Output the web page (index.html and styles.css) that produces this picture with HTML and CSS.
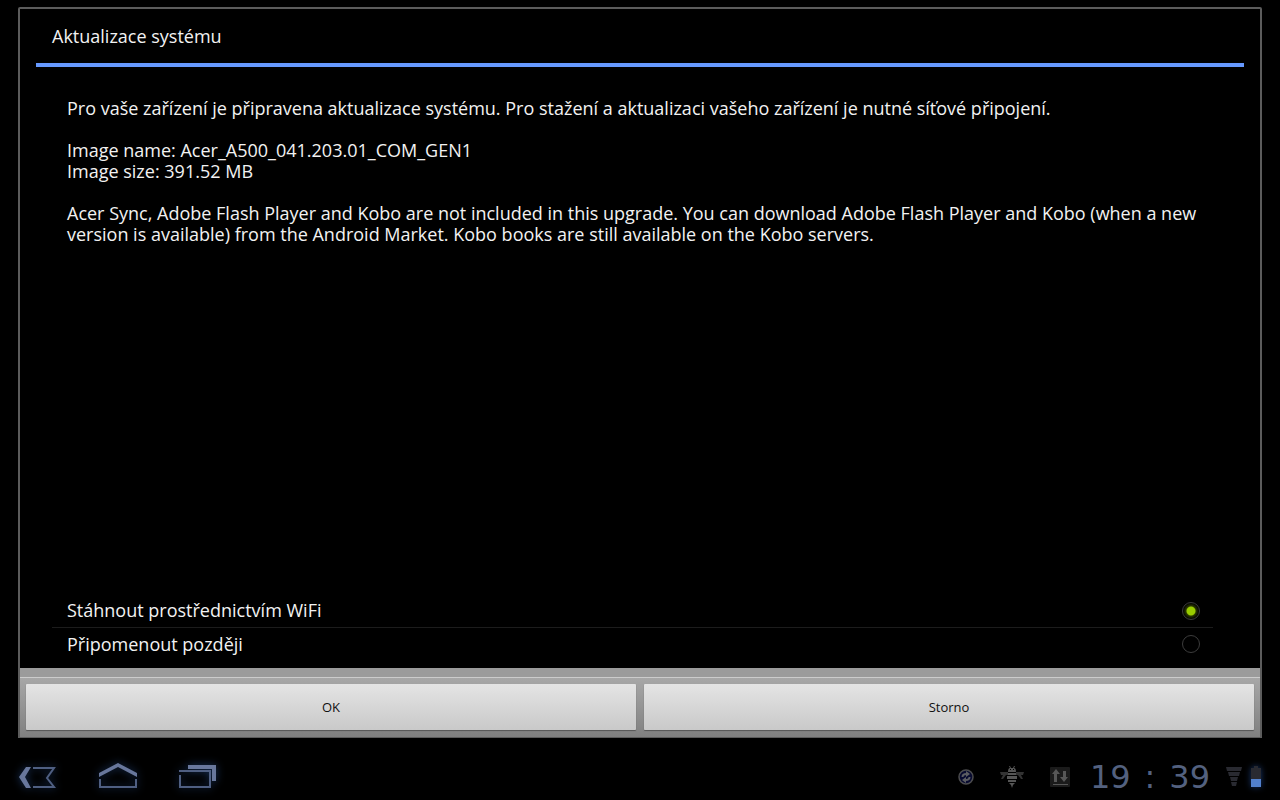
FILE: index.html
```html
<!DOCTYPE html>
<html lang="cs">
<head>
  <meta charset="UTF-8">
  <meta name="viewport" content="width=device-width, initial-scale=1">
  <title>Aktualizace systému</title>
  <link rel="stylesheet" href="styles.css">
</head>
<body>
  <form class="dialog">
    <h1 class="title">Aktualizace systému</h1>

    <div class="message">
      <p>Pro vaše zařízení je připravena aktualizace systému. Pro stažení a aktualizaci vašeho zařízení je nutné síťové připojení.</p>
      <p>Image name: Acer_A500_041.203.01_COM_GEN1<br>Image size: 391.52 MB</p>
      <p>Acer Sync, Adobe Flash Player and Kobo are not included in this upgrade. You can download Adobe Flash Player and Kobo (when a new version is available) from the Android Market. Kobo books are still available on the Kobo servers.</p>
    </div>

    <div class="options">
      <label class="option">
        <span>Stáhnout prostřednictvím WiFi</span>
        <input type="radio" name="action" value="wifi" checked>
      </label>
      <label class="option">
        <span>Připomenout později</span>
        <input type="radio" name="action" value="later">
      </label>
    </div>

    <div class="button-bar">
      <button type="button">OK</button>
      <button type="button">Storno</button>
    </div>
  </form>

  <footer class="system-bar">
    <nav class="nav">
      <button type="button" aria-label="Zpět">
        <svg width="40" height="28" viewBox="0 0 40 28">
          <path class="fill" d="M8 4h5L7 14l6 11H8L1 14z"/>
          <path class="line" d="M15 5h21l-7 10 7 9H15"/>
        </svg>
      </button>
      <button type="button" aria-label="Domů">
        <svg width="40" height="28" viewBox="0 0 40 28">
          <path class="fill" d="M1 10 20 0l19 10v4L20 4 1 14z"/>
          <path class="line" d="M2 16v8h36v-8"/>
        </svg>
      </button>
      <button type="button" aria-label="Poslední aplikace">
        <svg width="40" height="28" viewBox="0 0 40 28">
          <path class="fill" d="M10 2h28v16h-4V6H10z"/>
          <path class="line" d="M2 12v12h30V8H1"/>
        </svg>
      </button>
    </nav>

    <div class="status">
      <svg width="16" height="16" viewBox="0 0 16 16">
        <circle cx="8" cy="8" r="7" fill="#080b30" stroke="#4c4c4e" stroke-width="1.5"/>
        <path d="M4.500 8q0-3 4-3M11.500 8q0 3-4 3" fill="none" stroke="#5c5d62" stroke-width="2"/>
        <path d="M8 2l4 3-4 3zM8 14l-4-3 4-3z" fill="#5c5d62"/>
      </svg>
      <svg width="24" height="22" viewBox="0 0 24 22" fill="#565656">
        <path d="M0 6h8v3H6l-3 4H1l2-4H1zM24 6h-8v3h2l3 4h2l-2-4h2z" fill="#333"/>
        <path d="M8 6q0-4 2-4L9 0h1l1 2h2l1-2h1l-1 2q2 0 2 4zM8 7h8v2H8zM7 10h10v3H7zM8 14h8v2H8zM9 17h6l-2 2-1 3-1-3z"/>
        <path d="M10 3h1v1h-1zM13 3h1v1h-1z" fill="#000"/>
      </svg>
      <svg width="20" height="20" viewBox="0 0 20 20">
        <rect width="20" height="20" rx="1" fill="#1b1b1b"/>
        <path d="M6 2l4 5H7v8H4V7H2zM14 15l-4-5h3V4h3v6h2zM3 17h15v1H3z" fill="#575757"/>
      </svg>
      <time class="clock" datetime="19:39"><span>19</span><span>:</span><span>39</span></time>
      <div class="meters">
        <svg width="16" height="20" viewBox="0 0 16 20" fill="#292a31">
          <path d="M0 0h16l-1 4H1zM2 5h12l-1 4H3zM4 10h8l-1 4H5zM5 15h6l-1 4H6z"/>
        </svg>
        <svg class="battery" width="12" height="22" viewBox="0 0 12 22">
          <path d="M1 2h3V0h4v2h3v11H1z" fill="#292a31"/>
          <path d="M1 13h10v8H1z" fill="#5280cc"/>
        </svg>
      </div>
    </div>
  </footer>
</body>
</html>
```

FILE: styles.css
```css
* { box-sizing: border-box; }
body {
  display: flex;
  flex-direction: column;
  min-height: 100vh;
  margin: 0;
  padding-top: 7px;
  background: #000;
  color: #f2f2f2;
  font-family: "Open Sans", "Noto Sans", sans-serif;
  font-size: 18px;
  line-height: 21px;
}

.dialog {
  flex: 1;
  display: flex;
  flex-direction: column;
  margin: 0 18px 14px;
  border: 2px solid #5c5c5c;
  border-bottom-width: 1px;
  border-radius: 2px 2px 0 0;
}
.title {
  margin: 0 16px;
  padding: 17px 16px 16px;
  border-bottom: 4px solid #6699ff;
  font-size: 18px;
  font-weight: normal;
}
.message { flex: 1; padding: 31px 47px; }
.message p { margin: 0 0 21px; }

.options { padding: 0 47px 8px 32px; }
.option {
  display: flex;
  justify-content: space-between;
  align-items: center;
  height: 33px;
  padding: 0 13px 0 15px;
}
.option + .option { border-top: 1px solid #1c1c1c; }
.option input {
  appearance: none;
  width: 18px;
  height: 18px;
  margin: 0;
  border: 1px solid #3c3c3c;
  border-radius: 50%;
}
.option input:checked { background: radial-gradient(circle, #99cc00 4px, #2a3800 5px, #000 8px); }

.button-bar {
  display: flex;
  gap: 8px;
  padding: 16px 6px 7px;
  background: linear-gradient(#9b9b9b 9px, #cccccc 9px, #cccccc 10px, #a7a7a7 10px, #808080);
}
.button-bar button {
  flex: 1;
  height: 46px;
  padding: 0;
  border: 0;
  border-radius: 1px;
  background: linear-gradient(#e4e4e4, #c9c9c9);
  box-shadow: 0 1px 1px #555555;
  color: #111;
  font-family: inherit;
  font-size: 13px;
}

.system-bar {
  display: flex;
  justify-content: space-between;
  align-items: center;
  height: 48px;
  padding: 2px 18px 0;
}
.nav { display: flex; gap: 40px; }
.nav button { display: flex; padding: 0; border: 0; background: none; }
.nav svg { overflow: visible; filter: drop-shadow(0 0 4px #1b3763); }
.fill { fill: #68779c; }
.line { fill: none; stroke: #4f5f82; stroke-width: 2; }

.status { display: flex; align-items: center; gap: 26px; }
.clock {
  display: flex;
  justify-content: space-between;
  min-width: 120px;
  margin: 0 -10px 0 -6px;
  color: #53617f;
  font-family: "DejaVu Sans", sans-serif;
  font-size: 32px;
}
.meters { display: flex; align-items: center; gap: 8px; }
.battery { overflow: visible; filter: drop-shadow(0 0 3px #173467); }
```
